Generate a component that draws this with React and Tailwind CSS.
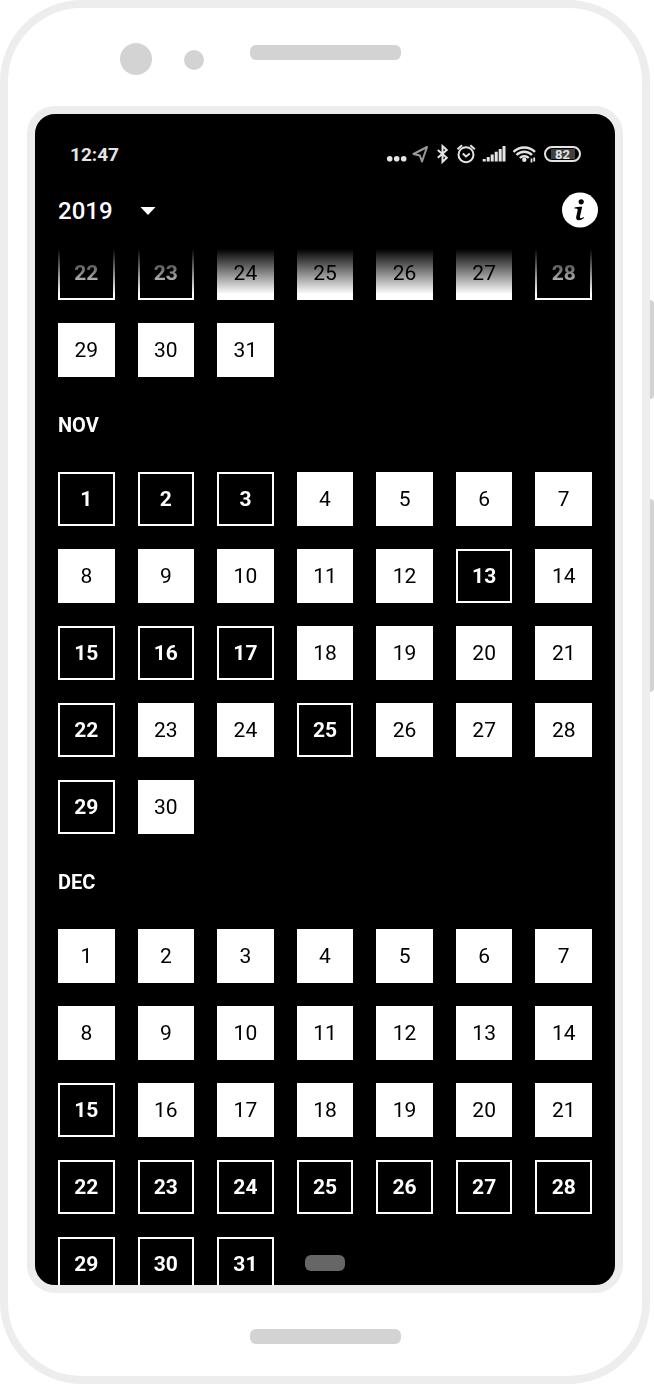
const months = [
  { name: 'OCT', first: 22, last: 31, marked: [22, 23, 28], hideName: true },
  { name: 'NOV', first: 1, last: 30, marked: [1, 2, 3, 13, 15, 16, 17, 22, 25, 29] },
  { name: 'DEC', first: 1, last: 31, marked: [15, 22, 23, 24, 25, 26, 27, 28, 29, 30, 31] },
];

function Day({ day, marked }) {
  return (
    <button
      type="button"
      aria-pressed={marked}
      className={
        marked
          ? 'h-[54px] border-2 border-white bg-black pt-0.5 text-[21px] font-bold text-white'
          : 'h-[54px] bg-white pt-0.5 text-[21px] text-black'
      }
    >
      {day}
    </button>
  );
}

function Month({ name, first, last, marked, hideName }) {
  const days = Array.from({ length: last - first + 1 }, (_, i) => first + i);
  return (
    <section aria-label={name}>
      {!hideName && (
        <h2 className="flex h-[95px] items-center text-xl font-bold text-white">{name}</h2>
      )}
      <div className="grid grid-cols-7 gap-[23px]">
        {days.map((day) => (
          <Day key={day} day={day} marked={marked.includes(day)} />
        ))}
      </div>
    </section>
  );
}

function StatusIcons() {
  return (
    <svg width="196" height="24" viewBox="0 0 196 24" fill="none" stroke="#e4e4e4" aria-hidden="true">
      <g fill="#e4e4e4" stroke="none">
        <circle cx="4.700" cy="16.700" r="2.800" />
        <circle cx="11.700" cy="16.700" r="2.800" />
        <circle cx="18.700" cy="16.700" r="2.800" />
      </g>
      <path d="M42 5 28.500 12 34.800 13.500 37 19.500Z" stroke="#999" strokeWidth="2" strokeLinejoin="round" />
      <path d="M52.800 8 61.800 15.800 57.500 20V4L61.800 8 52.800 15.800" strokeWidth="2" />
      <circle cx="81" cy="12.700" r="7.500" strokeWidth="2" />
      <path d="m77.800 11.500 3.200 3 3.800-3M72.500 7.200l4.500-4M89.800 7.200l-4.500-4" strokeWidth="2" />
      <path d="M99.200 19.500v-2.500M103.200 19.500v-4.500M107.200 19.500v-7M111.200 19.500v-9.800M115.200 19.500V7M119 19.500V4" strokeWidth="3" />
      <path d="M128.500 9.800a15.500 15.500 0 0 1 21.500 0M131.500 13a11 11 0 0 1 15.500 0M134.800 16a6.500 6.500 0 0 1 9 0" strokeWidth="2.400" />
      <circle cx="139.300" cy="17.800" r="2.200" fill="#e4e4e4" stroke="none" />
      <path d="M146.500 16.500v4M149.200 15.500v4" strokeWidth="1.800" />
    </svg>
  );
}

export default function App() {
  return (
    <div className="relative h-screen bg-white pr-1 font-[Roboto,'Liberation_Sans',sans-serif]">
      <div className="absolute right-0 top-[300px] h-[99px] w-2 rounded-r-sm bg-[#d3d3d3]" />
      <div className="absolute right-0 top-[499px] h-[193px] w-2 rounded-r-sm bg-[#d3d3d3]" />

      <div className="relative flex h-full flex-col rounded-[82px] border-8 border-[#ededed] bg-white px-[19px]">
        <div className="grid h-[98px] shrink-0 grid-cols-[1fr_151px_1fr] pt-[37px]">
          <div className="flex gap-8 pl-[93px]">
            <span className="mt-[-2px] size-8 rounded-full bg-[#d3d3d3]" />
            <span className="mt-[5px] size-5 rounded-full bg-[#d3d3d3]" />
          </div>
          <span className="h-[15px] rounded-md bg-[#d3d3d3]" />
        </div>

        <main className="relative flex min-h-0 flex-1 flex-col overflow-hidden rounded-[28px] border-8 border-[#ededed] bg-black">
          <div className="flex h-20 shrink-0 items-center justify-between pl-[35px] pr-[34px]">
            <span className="pt-0.5 text-[19px] font-bold text-[#e4e4e4]">12:47</span>
            <div className="relative flex h-6">
              <StatusIcons />
              <span className="absolute right-0 top-1 flex h-4 w-[37px] items-center justify-center rounded-full border-2 border-[#e4e4e4] text-[13px] font-bold leading-none text-[#e4e4e4]">
                <span className="flex h-2.5 w-6 items-center justify-center bg-[#404040]">82</span>
              </span>
            </div>
          </div>

          <header className="flex h-[52px] shrink-0 items-start justify-between pl-[23px] pr-[17px]">
            <label className="relative flex h-[34px] items-center text-white">
              <select
                aria-label="Year"
                defaultValue="2019"
                className="w-[98px] appearance-none bg-transparent text-2xl font-medium"
              >
                <option>2019</option>
              </select>
              <svg className="pointer-events-none absolute right-0" width="16" height="8" viewBox="0 0 16 8" aria-hidden="true">
                <path d="M0.500 0h15L8 8Z" fill="#fff" />
              </svg>
            </label>
            <button type="button" aria-label="Information" className="-mt-0.5">
              <svg width="36" height="36" viewBox="0 0 36 36" aria-hidden="true">
                <ellipse cx="18" cy="18" rx="18" ry="17.500" fill="#fff" />
                <circle cx="19.200" cy="9.800" r="2.600" />
                <path d="M12.500 15.500Q16 14.500 20.200 14.800L18 24.500Q17.800 26.500 19 26.300Q20.500 26 21.500 25L22 26Q19 28.500 16 28.200Q13.700 27.700 14.200 24.800L15.700 18Q16 16.400 12.500 16.600Z" />
              </svg>
            </button>
          </header>

          <div className="min-h-0 flex-1 overflow-y-auto px-[23px] [mask-image:linear-gradient(to_bottom,transparent_3px,black_48px)] [scrollbar-width:none]">
            {months.map((month) => (
              <Month key={month.name} {...month} />
            ))}
          </div>

          <span className="absolute bottom-[14px] left-1/2 h-4 w-10 -translate-x-1/2 rounded-md bg-[#666]" />
        </main>

        <div className="flex h-[83px] shrink-0 justify-center pt-9">
          <span className="h-[15px] w-[151px] rounded-md bg-[#d3d3d3]" />
        </div>
      </div>
    </div>
  );
}
